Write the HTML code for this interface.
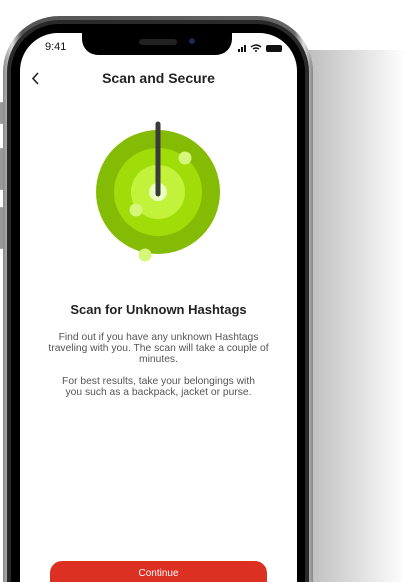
<!DOCTYPE html>
<html><head><style>
html,body{margin:0;padding:0;width:406px;height:582px;overflow:hidden;background:#fff;font-family:"Liberation Sans",Arial,sans-serif}
.wrap{position:relative;width:406px;height:582px;overflow:hidden}
.shadow{position:absolute;left:306px;top:50px;width:100px;height:532px;background:linear-gradient(90deg,#bdbdbd 0%,#d0d0d0 30%,#fff 100%)}
.f1{position:absolute;left:3px;top:16px;width:310px;height:566px;border-radius:56px 56px 0 0;background:linear-gradient(90deg,#888,#ddd 3%,#555 6%,#666 94%,#ddd 97%,#888);}
.f2{position:absolute;left:7px;top:20px;width:302px;height:562px;border-radius:52px 52px 0 0;background:#2a2a2a}
.f3{position:absolute;left:11px;top:24px;width:294px;height:558px;border-radius:48px 48px 0 0;background:#000}
.screen{position:absolute;left:20px;top:33px;width:277px;height:549px;border-radius:38px 38px 0 0;background:#fff;overflow:hidden}
.notch{position:absolute;left:62px;top:0;width:150px;height:22px;background:#000;border-radius:0 0 16px 16px}
.btnl{position:absolute;left:0;width:3px;background:#999;border-radius:1px}
</style></head><body><div class="wrap">
<div class="shadow"></div>
<div class="btnl" style="top:102px;height:22px"></div>
<div class="btnl" style="top:148px;height:42px"></div>
<div class="btnl" style="top:207px;height:42px"></div>
<div class="f1"></div><div class="f2"></div><div class="f3"></div>
<div class="screen">
 <div class="notch"><div style="position:absolute;left:57px;top:6px;width:38px;height:6px;border-radius:3px;background:#222"></div><div style="position:absolute;left:107px;top:5px;width:6px;height:6px;border-radius:3px;background:#1a2a55"></div></div>
 <div style="position:absolute;left:25px;top:8px;font-size:11px;color:#111">9:41</div>
 <svg style="position:absolute;left:218px;top:10px" width="50" height="10"><rect x="0" y="6" width="2" height="3" fill="#111"/><rect x="3" y="4" width="2" height="5" fill="#111"/><rect x="6" y="2" width="2" height="7" fill="#111"/><path d="M13 4 Q18 0 23 4 M15 6 Q18 4 21 6" stroke="#111" stroke-width="1.4" fill="none"/><circle cx="18" cy="8" r="1" fill="#111"/><rect x="28" y="2" width="16" height="7" rx="2" fill="#111"/></svg>
 <svg style="position:absolute;left:10px;top:38px" width="12" height="16"><path d="M8 2 L3 7.5 L8 13" stroke="#222" stroke-width="1.6" fill="none"/></svg>
 <div style="position:absolute;left:0;width:277px;top:37px;text-align:center;font-weight:bold;font-size:14px;color:#222">Scan and Secure</div>
 <svg style="position:absolute;left:0;top:0" width="277" height="260">
  <circle cx="138" cy="159" r="62" fill="#84bc05"/>
  <circle cx="138" cy="159" r="44" fill="#a0dc08"/>
  <circle cx="138" cy="159" r="27" fill="#c2f23a"/>
  <circle cx="138" cy="159" r="9" fill="#eaffc0"/>
  <circle cx="165" cy="125" r="6.5" fill="#d4f779"/>
  <circle cx="116" cy="177" r="6.5" fill="#d4f779"/>
  <circle cx="125" cy="222" r="6.5" fill="#d4f779"/>
  <line x1="138" y1="91" x2="138" y2="161" stroke="#3a3a3c" stroke-width="5" stroke-linecap="round"/>
 </svg>
 <div style="position:absolute;left:0;width:277px;top:269px;text-align:center;font-weight:bold;font-size:13px;color:#222">Scan for Unknown Hashtags</div>
 <div style="position:absolute;left:24px;width:229px;top:299px;text-align:center;font-size:10.3px;line-height:11px;color:#555">Find out if you have any unknown Hashtags traveling with you. The scan will take a couple of minutes.<br><br>For best results, take your belongings with<br>you such as a backpack, jacket or purse.</div>
 <div style="position:absolute;left:30px;top:528px;width:217px;height:21px;border-radius:12px 12px 0 0;background:#dc3023;color:#fff;font-size:10px;text-align:center;line-height:25px">Continue</div>
</div>
</div></body></html>
